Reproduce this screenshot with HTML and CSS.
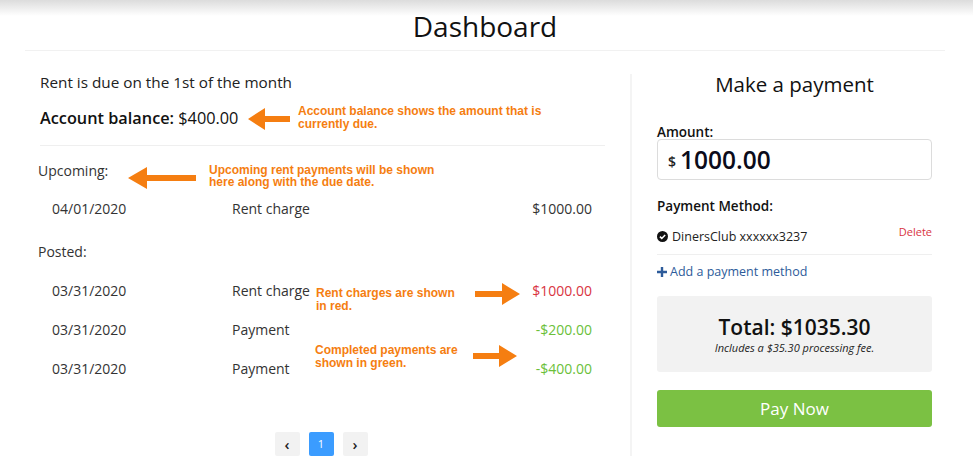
FILE: index.html
```html
<!DOCTYPE html>
<html lang="en">
<head>
    <meta charset="UTF-8">
    <title>Dashboard</title>
    <link rel="stylesheet" href="styles.css">
</head>
<body>
    <div class="topbar"></div>
    <div class="container">
        <h1 class="page-title">Dashboard</h1>

        <div class="layout">
            <div class="ledger">
                <p class="due-note">Rent is due on the 1st of the month</p>
                <p class="balance"><b>Account balance:</b> $400.00</p>

                <div class="section-label">Upcoming:</div>
                <div class="tx-list">
                    <div class="tx-row">
                        <span class="tx-date">04/01/2020</span>
                        <span class="tx-desc">Rent charge</span>
                        <span class="tx-amount">$1000.00</span>
                    </div>
                </div>

                <div class="section-label posted">Posted:</div>
                <div class="tx-list">
                    <div class="tx-row">
                        <span class="tx-date">03/31/2020</span>
                        <span class="tx-desc">Rent charge</span>
                        <span class="tx-amount charge">$1000.00</span>
                    </div>
                    <div class="tx-row">
                        <span class="tx-date">03/31/2020</span>
                        <span class="tx-desc">Payment</span>
                        <span class="tx-amount paid">-$200.00</span>
                    </div>
                    <div class="tx-row">
                        <span class="tx-date">03/31/2020</span>
                        <span class="tx-desc">Payment</span>
                        <span class="tx-amount paid">-$400.00</span>
                    </div>
                </div>

                <div class="pager">
                    <button class="page-btn">&#8249;</button>
                    <button class="page-btn active">1</button>
                    <button class="page-btn">&#8250;</button>
                </div>

                <!-- help annotations -->
                <div class="note note-balance">
                    <svg class="arrow" width="42" height="22" viewBox="0 0 42 22"><path d="M0 11 L17 0 L17 8 L42 8 L42 14 L17 14 L17 22 Z"/></svg>
                    <span>Account balance shows the amount that is<br>currently due.</span>
                </div>
                <div class="note note-upcoming">
                    <svg class="arrow" width="68" height="22" viewBox="0 0 68 22"><path d="M0 11 L19 0 L19 8 L68 8 L68 14 L19 14 L19 22 Z"/></svg>
                    <span>Upcoming rent payments will be shown<br>here along with the due date.</span>
                </div>
                <div class="note note-red">
                    <span>Rent charges are shown<br>in red.</span>
                    <svg class="arrow" width="45" height="22" viewBox="0 0 45 22"><path d="M45 11 L27 0 L27 8 L0 8 L0 14 L27 14 L27 22 Z"/></svg>
                </div>
                <div class="note note-green">
                    <span>Completed payments are<br>shown in green.</span>
                    <svg class="arrow" width="44" height="22" viewBox="0 0 44 22"><path d="M44 11 L26 0 L26 8 L0 8 L0 14 L26 14 L26 22 Z"/></svg>
                </div>
            </div>

            <div class="payment">
                <h2>Make a payment</h2>

                <label class="field-label">Amount:</label>
                <div class="amount-box">
                    <span class="currency">$</span>
                    <span class="amount">1000.00</span>
                </div>

                <label class="field-label method">Payment Method:</label>
                <div class="method-item">
                    <svg width="11" height="11" viewBox="0 0 12 12"><circle cx="6" cy="6" r="6" fill="#111"/><path d="M3.2 6.2 L5.2 8.1 L8.9 4.3" fill="none" stroke="#fff" stroke-width="1.7"/></svg>
                    <span class="card-name">DinersClub xxxxxx3237</span>
                    <a class="delete">Delete</a>
                </div>
                <a class="add-method">
                    <svg width="10" height="10" viewBox="0 0 10 10"><path d="M3.8 0 H6.2 V3.8 H10 V6.2 H6.2 V10 H3.8 V6.2 H0 V3.8 H3.8 Z" fill="#2d5b9a"/></svg>
                    Add a payment method
                </a>

                <div class="total-box">
                    <div class="total">Total: $1035.30</div>
                    <div class="fee">Includes a $35.30 processing fee.</div>
                </div>

                <button class="pay-btn">Pay Now</button>
            </div>
        </div>
    </div>
</body>
</html>
```

FILE: styles.css
```css
body {
    font-family: 'Open Sans', 'Noto Sans', sans-serif;
    margin: 0;
    background: #ffffff;
    color: #222;
    height: 461px;
    overflow: hidden;
    position: relative;
}
.topbar {
    position: absolute;
    top: 0;
    left: 0;
    right: 0;
    height: 16px;
    background: linear-gradient(#dcdcdc, #ffffff);
}
.container {
    position: relative;
    margin: 0 28px 0 25px;
}
.page-title {
    margin: 0;
    padding-top: 7px;
    height: 43px;
    font-size: 28px;
    font-weight: 400;
    line-height: 38px;
    text-align: center;
    color: #111;
    border-bottom: 1px solid #f1f1f1;
}
.layout {
    display: grid;
    grid-template-columns: 605px 1fr;
}
.ledger {
    position: relative;
    padding: 21px 25px 0 0;
}
.due-note {
    margin: 0 0 0 15px;
    font-size: 15.3px;
    line-height: 20px;
    color: #222;
}
.balance {
    margin: 14px 0 0 15px;
    font-size: 16.3px;
    line-height: 24px;
    color: #111;
    padding-bottom: 15px;
    border-bottom: 1px solid #efefef;
}
.balance b {
    font-weight: 600;
}
.section-label {
    margin: 15px 0 0 13px;
    font-size: 14px;
    line-height: 20px;
    color: #333;
}
.section-label.posted {
    margin-top: 14px;
}
.tx-list {
    margin-top: 8px;
}
.section-label.posted + .tx-list {
    margin-top: 9px;
}
.tx-row {
    display: flex;
    align-items: center;
    height: 39px;
    padding: 0 13px 0 27px;
    font-size: 14px;
    color: #333;
}
.tx-date {
    width: 180px;
}
.tx-desc {
    flex: 1;
}
.tx-amount {
    text-align: right;
}
.tx-amount.charge {
    color: #d9343f;
}
.tx-amount.paid {
    color: #6bbf3a;
}
.pager {
    display: flex;
    justify-content: center;
    gap: 9px;
    margin: 44px 0 0 12px;
}
.page-btn {
    width: 25px;
    height: 24px;
    border: none;
    border-radius: 2px;
    background: #f2f2f2;
    color: #222;
    font-family: 'Open Sans', sans-serif;
    font-size: 15px;
    font-weight: 600;
    line-height: 22px;
    padding: 0;
}
.page-btn.active {
    background: #3b9cff;
    color: #fff;
    font-size: 11px;
    font-weight: 400;
}
.note {
    position: absolute;
    display: flex;
    align-items: center;
    font-family: 'Liberation Sans', Arial, sans-serif;
    font-weight: 700;
    font-size: 12px;
    line-height: 12.5px;
    color: #f57e11;
}
.note .arrow {
    fill: #f57e11;
    flex: none;
}
.note-balance {
    left: 223px;
    top: 54px;
    gap: 8px;
}
.note-balance .arrow {
    margin-top: 2px;
}
.note-upcoming {
    left: 103px;
    top: 112px;
    gap: 13px;
}
.note-upcoming .arrow {
    margin-top: 4px;
}
.note-red {
    left: 291px;
    top: 236px;
}
.note-red span {
    width: 159px;
}
.note-red .arrow {
    margin-top: -12px;
}
.note-green {
    left: 290px;
    top: 293px;
}
.note-green span {
    width: 158px;
}
.note-green .arrow {
    margin-top: -2px;
}
.payment {
    border-left: 2px solid #f4f4f4;
    margin-top: 23px;
    padding: 0 13px 0 25px;
}
.payment h2 {
    margin: -4px 0 0;
    font-size: 20.5px;
    font-weight: 400;
    line-height: 28px;
    text-align: center;
    color: #111;
}
.field-label {
    display: block;
    margin-top: 24px;
    font-size: 13.5px;
    font-weight: 600;
    line-height: 20px;
    color: #111;
}
.field-label.method {
    margin-top: 16px;
}
.amount-box {
    display: flex;
    align-items: center;
    height: 39px;
    margin-top: -3px;
    border: 1px solid #dcdcdc;
    border-radius: 4px;
    padding: 0 10px;
    gap: 4px;
}
.currency {
    font-size: 14px;
    font-weight: 600;
    color: #222;
    margin-top: 3px;
}
.amount {
    font-size: 24.5px;
    font-weight: 600;
    color: #0b0b1a;
}
.method-item {
    display: flex;
    align-items: center;
    gap: 4px;
    margin-top: 12px;
    padding-bottom: 9px;
    border-bottom: 1px solid #efefef;
    font-size: 12.5px;
    color: #222;
}
.card-name {
    flex: 1;
}
.delete {
    color: #d9343f;
    font-size: 11px;
    align-self: flex-start;
    margin-top: -4px;
}
.add-method {
    display: flex;
    align-items: center;
    gap: 3px;
    margin-top: 8px;
    font-size: 12.5px;
    color: #2d5b9a;
}
.total-box {
    margin-top: 16px;
    height: 76px;
    background: #f2f2f2;
    border-radius: 3px;
    text-align: center;
    box-sizing: border-box;
    padding-top: 18px;
}
.total {
    font-size: 21px;
    font-weight: 600;
    line-height: 26px;
    color: #111;
}
.fee {
    font-size: 11px;
    font-style: italic;
    color: #222;
    line-height: 15px;
}
.pay-btn {
    display: block;
    width: 100%;
    margin-top: 18px;
    height: 37px;
    border: none;
    border-radius: 3px;
    background: #7bc143;
    color: #fff;
    font-family: 'Open Sans', sans-serif;
    font-size: 17px;
}
```
